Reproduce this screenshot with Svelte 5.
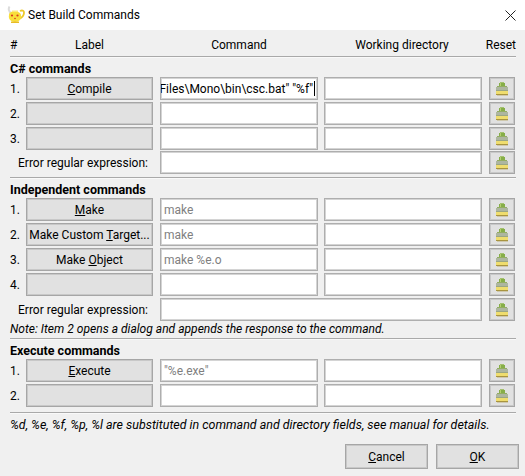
<script>
	const sections = [
		{
			title: 'C# commands',
			rows: [
				{ label: 'Compile', key: 'C', command: 'Files\\Mono\\bin\\csc.bat" "%f"', active: true },
				{ label: '' },
				{ label: '' }
			],
			regex: true,
			tight: true
		},
		{
			title: 'Independent commands',
			rows: [
				{ label: 'Make', key: 'M', hint: 'make' },
				{ label: 'Make Custom Target...', key: 'T', hint: 'make' },
				{ label: 'Make Object', key: 'O', hint: 'make %e.o' },
				{ label: '' }
			],
			regex: true,
			note: 'Note: Item 2 opens a dialog and appends the response to the command.'
		},
		{
			title: 'Execute commands',
			rows: [
				{ label: 'Execute', key: 'E', hint: '"%e.exe"' },
				{ label: '' }
			]
		}
	];

	// split a label around its mnemonic letter
	function parts(label, key) {
		const i = label.indexOf(key);
		return [label.slice(0, i), label.slice(i, i + 1), label.slice(i + 1)];
	}
</script>

{#snippet brush()}
	<svg width="12" height="14" viewBox="0 0 12 14" shape-rendering="crispEdges">
		<rect x="4" y="0" width="4" height="1" fill="#a4c070" />
		<rect x="3" y="1" width="6" height="3" fill="#86ae48" />
		<rect x="4" y="1" width="1" height="3" fill="#b4d070" />
		<rect x="1" y="4" width="10" height="1" fill="#93ad62" />
		<rect x="0" y="5" width="12" height="3" fill="#adb6a0" />
		<rect x="0" y="8" width="12" height="1" fill="#9aa684" />
		<rect x="0" y="9" width="12" height="3" fill="#efdd6e" />
		<rect x="0" y="12" width="12" height="1" fill="#a89440" />
		<rect x="1" y="13" width="11" height="1" fill="#cfc8ac" />
	</svg>
{/snippet}

<div class="dialog">
	<header class="titlebar">
		<svg class="logo" width="18" height="18" viewBox="0 0 18 18">
			<path d="M2.5 0.5 C1 3 2 6 4 7" fill="none" stroke="#dcdcdc" stroke-width="2" />
			<path d="M13 5 C18.5 2.5 18.5 10 12 13" fill="none" stroke="#ecc828" stroke-width="1.8" />
			<path d="M2 9 C2 4 13 4 14 9 C15 13 12 16 8 16 C4 16 1 13 2 9 Z" fill="#f8de3a" />
			<path d="M4 15.5 H12 V17 H4 Z" fill="#e8bc24" />
			<rect x="5" y="4.5" width="6" height="1.5" fill="#fbe880" />
			<circle cx="5" cy="9.5" r="1.1" fill="#d83a20" />
			<circle cx="10.5" cy="9.5" r="1.1" fill="#d83a20" />
			<circle cx="8" cy="12.5" r="0.8" fill="#d83a20" />
		</svg>
		<span class="title">Set Build Commands</span>
		<svg class="close" width="11" height="11" viewBox="0 0 11 11">
			<path d="M0.5 0.5 L10.5 10.5 M10.5 0.5 L0.5 10.5" stroke="#222" stroke-width="1" fill="none" />
		</svg>
	</header>

	<main class="content">
		<div class="heading">
			<span>#</span>
			<span class="center">Label</span>
			<span class="center">Command</span>
			<span class="center">Working directory</span>
			<span class="end">Reset</span>
		</div>

		{#each sections as section}
			<section class="section">
				<h3>{section.title}</h3>
				{#each section.rows as row, i}
					<div class="row">
						<span>{i + 1}.</span>
						<button class="label-btn">
							{#if row.label}
								{@const [a, b, c] = parts(row.label, row.key)}
								{a}<u>{b}</u>{c}
							{/if}
						</button>
						{#if row.active}
							<div class="field command scrolled"><span>{row.command}</span><i class="caret"></i></div>
						{:else}
							<div class="field command hint">{row.hint ?? ''}</div>
						{/if}
						<div class="field directory"></div>
						<button class="reset">{@render brush()}</button>
					</div>
				{/each}
				{#if section.regex}
					<div class="regex" class:tight={section.tight}>
						<span class="regex-label">Error regular expression:</span>
						<div class="field directory"></div>
						<button class="reset">{@render brush()}</button>
					</div>
				{/if}
				{#if section.note}
					<p class="note section-note">{section.note}</p>
				{/if}
			</section>
		{/each}

		<p class="note footer-note">%d, %e, %f, %p, %l are substituted in command and directory fields, see manual for details.</p>

		<div class="actions">
			<button class="action"><u>C</u>ancel</button>
			<button class="action"><u>O</u>K</button>
		</div>
	</main>
</div>

<style>
	:global(body) {
		margin: 0;
	}

	.dialog {
		width: 525px;
		height: 476px;
		display: flex;
		flex-direction: column;
		background: #f0f0f0;
		font-family: Roboto, "Open Sans", sans-serif;
		font-size: 12px;
		color: #000;
		overflow: hidden;
	}

	.titlebar {
		height: 30px;
		flex: none;
		display: flex;
		align-items: center;
		background: #fff;
		padding: 0 9px 0 7px;
	}

	.logo {
		margin-right: 3px;
	}

	.title {
		flex: 1;
	}

	.close {
		flex: none;
	}

	.content {
		flex: 1;
		padding: 0 9px 0 10px;
		display: flex;
		flex-direction: column;
	}

	.heading {
		display: grid;
		grid-template-columns: 16px 127px 172px 154px 37px;
		align-items: center;
		height: 27px;
		box-sizing: border-box;
		padding-top: 4px;
		border-bottom: 1px solid #a9a9a9;
		box-shadow: 0 1px 0 #f9f9f9;
	}

	.center {
		text-align: center;
	}

	.end {
		text-align: right;
	}

	.section {
		border-bottom: 1px solid #a9a9a9;
		box-shadow: 0 1px 0 #f9f9f9;
		padding-bottom: 1px;
	}

	.section:last-of-type {
		padding-bottom: 3px;
	}

	h3 {
		margin: 0;
		height: 20px;
		box-sizing: border-box;
		padding-top: 3px;
		font-size: 12.5px;
		font-weight: 700;
		line-height: 17px;
	}

	.row {
		display: grid;
		grid-template-columns: 16px 134px 164px 165px 26px;
		align-items: center;
		margin-bottom: 2px;
	}

	.regex {
		display: grid;
		grid-template-columns: 150px 329px 26px;
		align-items: center;
		margin-bottom: 2px;
	}

	.tight {
		margin-top: -1px;
	}

	.label-btn,
	.reset,
	.action {
		font: inherit;
		color: inherit;
		background: #e1e1e1;
		border: 1px solid #a6a6a6;
		box-shadow: inset 0 0 0 1px #c8c8c8;
		box-sizing: border-box;
		padding: 0;
		margin: 0;
	}

	.label-btn {
		height: 23px;
		margin-right: 7px;
		white-space: nowrap;
	}

	.field {
		height: 23px;
		box-sizing: border-box;
		background: #fff;
		border: 1px solid #aeaeae;
		box-shadow: inset 0 0 0 1px #d4d4d4;
		padding: 0 3px;
		line-height: 22px;
		white-space: nowrap;
		overflow: hidden;
	}

	.command {
		margin-right: 6px;
	}

	.directory {
		margin-right: 7px;
	}

	.hint {
		color: #7f7f7f;
	}

	.scrolled {
		display: flex;
		justify-content: flex-end;
		padding-right: 2px;
	}

	.scrolled span {
		flex: none;
	}

	.caret {
		flex: none;
		width: 1px;
		height: 15px;
		margin: 3px 0 0 1px;
		background: #000;
	}

	.reset {
		height: 23px;
		display: flex;
		align-items: center;
		justify-content: center;
	}

	.regex-label {
		padding-left: 8px;
	}

	.note {
		margin: 0;
		font-size: 12.45px;
		font-style: italic;
		line-height: 16px;
	}

	.section-note {
		margin-top: -2px;
		font-size: 12.05px;
	}

	.footer-note {
		margin-top: 4px;
	}

	.actions {
		display: flex;
		justify-content: flex-end;
		gap: 8px;
		margin-top: 11px;
		margin-right: -3px;
	}

	.action {
		width: 83px;
		height: 25px;
	}
</style>
